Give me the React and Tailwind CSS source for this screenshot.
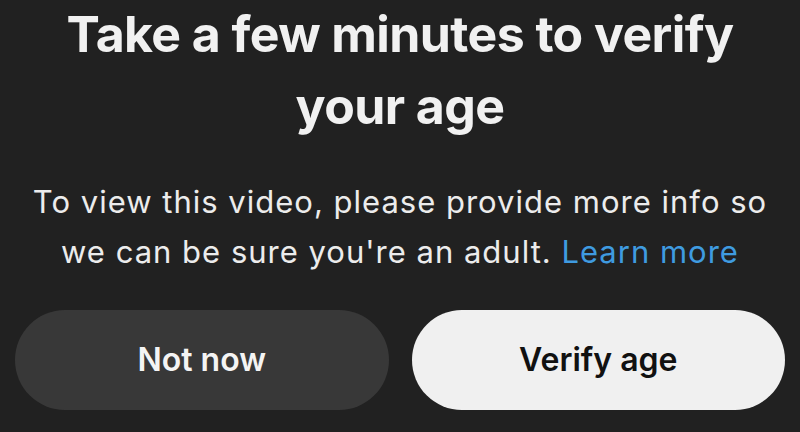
export default function App() {
  return (
    <div
      className="w-[800px] h-[432px] overflow-hidden bg-[#212121] text-[#f1f1f1] flex flex-col items-center"
      style={{ fontFamily: 'Inter, "Noto Sans", sans-serif' }}
    >
      <h1 className="mt-[-2px] text-center font-bold text-[50px] leading-[72px] tracking-[-0.6px] whitespace-nowrap">
        Take a few minutes to verify
        <br />
        your age
      </h1>
      <p className="mt-[35px] text-center text-[31px] leading-[50px] tracking-[1px] text-[#ececec] whitespace-nowrap">
        To view this video, please provide more info so
        <br />
        we can be sure you're an adult.{' '}
        <span className="text-[#3f9be0]">Learn more</span>
      </p>
      <div className="mt-[33px] w-full px-[15px] flex gap-[23px]">
        <button className="flex-1 h-[100px] rounded-full bg-[#383838] text-[#f4f4f4] text-[32px] font-semibold">
          Not now
        </button>
        <button className="flex-1 h-[100px] rounded-full bg-[#f0f0f0] text-[#111] text-[32px] font-semibold">
          Verify age
        </button>
      </div>
    </div>
  );
}
